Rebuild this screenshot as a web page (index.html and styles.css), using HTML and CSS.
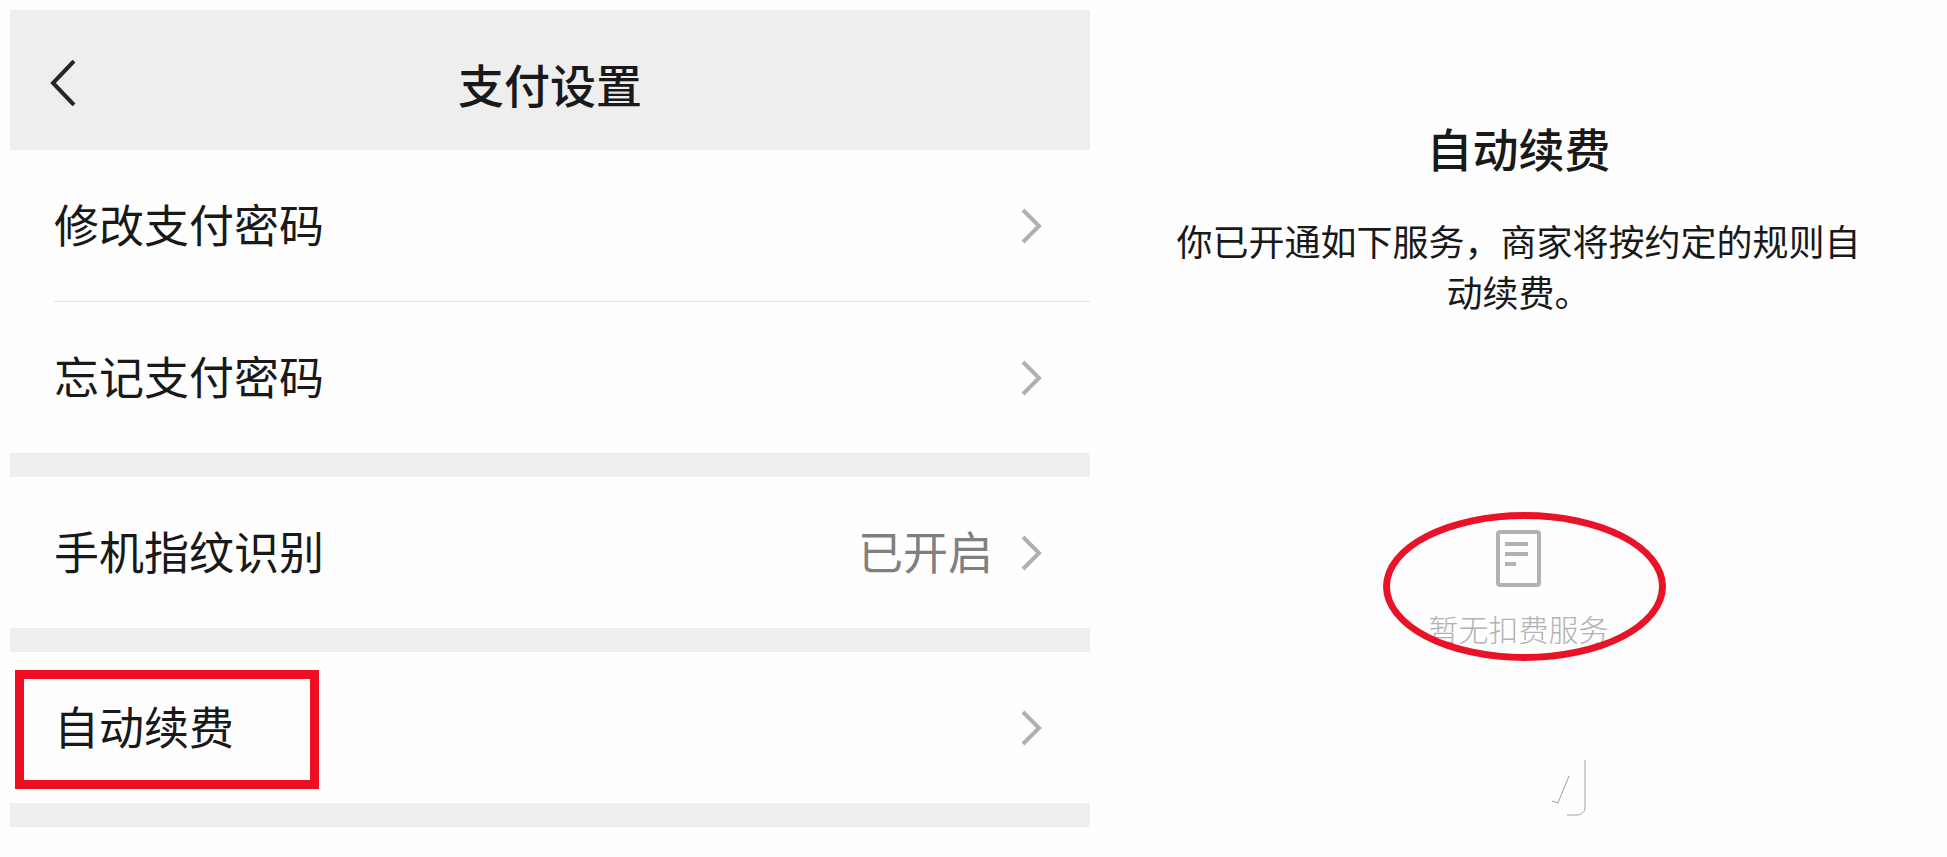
FILE: index.html
```html
<!DOCTYPE html>
<html lang="zh-CN">
<head>
    <meta charset="UTF-8">
    <meta name="viewport" content="width=device-width, initial-scale=1.0">
    <title>支付设置</title>
    <link rel="stylesheet" href="styles.css">
</head>
<body>
    <main class="page">
        <section class="settings">
            <header class="topbar">
                <button type="button" class="back" aria-label="返回">
                    <svg width="26" height="46" viewBox="0 0 26 46"><path d="M24 1L3 23L24 45"/></svg>
                </button>
                <h1 class="title">支付设置</h1>
            </header>

            <nav class="group">
                <a class="row" href="#">
                    <span class="label">修改支付密码</span>
                    <svg class="arrow" width="21" height="36" viewBox="0 0 21 36"><path d="M2 2L18 18L2 34"/></svg>
                </a>
                <a class="row" href="#">
                    <span class="label">忘记支付密码</span>
                    <svg class="arrow" width="21" height="36" viewBox="0 0 21 36"><path d="M2 2L18 18L2 34"/></svg>
                </a>
            </nav>
            <nav class="group">
                <a class="row" href="#">
                    <span class="label">手机指纹识别</span>
                    <span class="value">已开启</span>
                    <svg class="arrow" width="21" height="36" viewBox="0 0 21 36"><path d="M2 2L18 18L2 34"/></svg>
                </a>
            </nav>
            <nav class="group">
                <a class="row marked" href="#">
                    <span class="label">自动续费</span>
                    <svg class="arrow" width="21" height="36" viewBox="0 0 21 36"><path d="M2 2L18 18L2 34"/></svg>
                </a>
            </nav>
        </section>

        <section class="renewal">
            <h2 class="title">自动续费</h2>
            <p class="intro">你已开通如下服务，商家将按约定的规则自动续费。</p>
            <div class="empty">
                <svg class="doc" width="46" height="58" viewBox="0 0 46 58">
                    <rect x="3" y="2" width="41" height="53" rx="2"/>
                    <path d="M10 14H33M10 24H33M10 34H21"/>
                </svg>
                <p class="empty-text">暂无扣费服务</p>
            </div>
            <svg class="stroke-mark" width="36" height="58" viewBox="0 0 36 58">
                <path d="M1 42L7 44L18 17M34 1V50Q32 56 26 56H16"/>
            </svg>
        </section>
    </main>
</body>
</html>
```
FILE: styles.css
```css
*, *::before, *::after {
    box-sizing: border-box;
}

body {
    margin: 0;
    padding: 10px 0 0 10px;
    font-family: "Noto Sans CJK SC", sans-serif;
    background-color: #fefefe;
    color: #191919;
}

h1, h2, p {
    margin: 0;
}

svg {
    display: block;
    fill: none;
}

.page {
    display: grid;
    grid-template-columns: 63fr 50fr;
}

.title {
    font-size: 46px;
    line-height: 60px;
    font-weight: 500;
    text-align: center;
}

.topbar {
    display: grid;
    grid-template-columns: 66px 1fr 66px;
    align-items: center;
    height: 140px;
    padding-top: 6px;
    background-color: #eeeeee;
}

.back {
    padding: 0 0 0 40px;
    border: none;
    background: none;
    cursor: pointer;
}

.back svg {
    stroke: #262626;
    stroke-width: 4;
}

.group {
    border-bottom: 24px solid #eeeeee;
}

.row {
    position: relative;
    display: flex;
    align-items: center;
    height: 151px;
    margin-left: 44px;
    padding-right: 48px;
    color: inherit;
    font-size: 45px;
    line-height: 60px;
    text-decoration: none;
}

.row + .row {
    height: 152px;
    border-top: 1px solid #e2e2e2;
}

.label, .value {
    padding-bottom: 4px;
}

.label {
    flex: 1;
}

.value {
    margin-right: 28px;
    color: #808080;
}

.arrow {
    stroke: #b0b0b0;
    stroke-width: 4;
}

/* red frame around the highlighted entry */
.marked::before {
    content: "";
    position: absolute;
    top: 18px;
    left: -39px;
    width: 304px;
    height: 119px;
    border: 9px solid #ef0f24;
}

.renewal {
    display: flex;
    flex-direction: column;
    align-items: center;
    padding: 107px 86px 0;
}

.intro {
    margin-top: 38px;
    font-size: 36px;
    line-height: 51px;
    text-align: center;
}

.empty {
    position: relative;
    display: flex;
    flex-direction: column;
    align-items: center;
    gap: 18px;
    margin-top: 213px;
}

.empty::after {
    content: "";
    position: absolute;
    top: -18px;
    left: -45px;
    width: 283px;
    height: 149px;
    border: 7px solid #ea1226;
    border-radius: 50%;
}

.doc {
    stroke: #b2b2b2;
    stroke-width: 4;
}

.empty-text {
    color: #b2b2b2;
    font-size: 30px;
    line-height: 44px;
    font-weight: 300;
}

.stroke-mark {
    margin: 109px 0 0 102px;
    stroke: #a0a0a0;
    stroke-width: 1;
}
```
